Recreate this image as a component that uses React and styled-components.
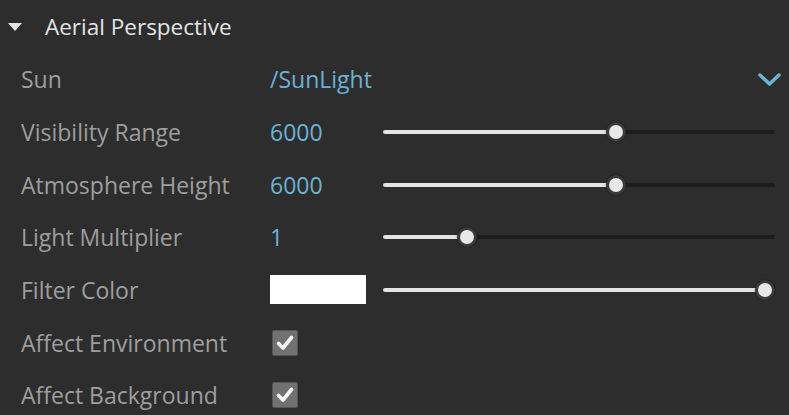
import styled, { createGlobalStyle } from "styled-components";

const GlobalStyle = createGlobalStyle`
  html, body {
    margin: 0;
    padding: 0;
    background: #2d2d2d;
  }
  body {
    font-family: "Open Sans", "Noto Sans", sans-serif;
  }
`;

const Panel = styled.div`
  width: 789px;
  height: 415px;
  background: #2d2d2d;
  overflow: hidden;
`;

const Header = styled.div`
  display: flex;
  align-items: center;
  height: 53px;
  padding-left: 8px;
  gap: 10px;
  color: #e4e4e4;
  font-size: 22.5px;
`;

const Caret = styled.span`
  width: 0;
  height: 0;
  border-left: 7px solid transparent;
  border-right: 7px solid transparent;
  border-top: 8px solid #e4e4e4;
  margin-right: 13px;
  margin-top: 1px;
`;

const Row = styled.div`
  display: grid;
  grid-template-columns: 249px 113px 1fr;
  align-items: center;
  height: 52.67px;
  padding-left: 21px;
  padding-right: 14px;
`;

const Label = styled.div`
  color: #9e9e9e;
  font-size: 23px;
  white-space: nowrap;
`;

const Value = styled.div`
  color: #6cb2d6;
  font-size: 23px;
  white-space: nowrap;
`;

const SelectValue = styled(Value)`
  grid-column: 2 / 4;
  display: flex;
  align-items: center;
  justify-content: space-between;
  margin-right: -6px;
`;

const Track = styled.div`
  position: relative;
  height: 4px;
  background: #1d1d1d;
  border-radius: 2px;
`;

const Fill = styled.div`
  height: 100%;
  background: #e4e4e4;
  border-radius: 2px;
`;

const Thumb = styled.div`
  position: absolute;
  top: 50%;
  width: 14px;
  height: 14px;
  border-radius: 50%;
  background: #e8e8e8;
  border: 3px solid #3a3a3a;
  box-shadow: 0 0 2px rgba(0, 0, 0, 0.6);
  transform: translate(-50%, -50%);
`;

const Swatch = styled.div`
  width: 96px;
  height: 29px;
  background: #ffffff;
`;

const Check = styled.div`
  width: 24px;
  height: 24px;
  margin-left: 2px;
  background: #717171;
  border: 1px solid #555555;
  border-radius: 2px;
  display: flex;
  align-items: center;
  justify-content: center;
`;

function Slider({ pct }) {
  return (
    <Track>
      <Fill style={{ width: `${pct}%` }} />
      <Thumb style={{ left: `${pct}%` }} />
    </Track>
  );
}

function CheckMark() {
  return (
    <svg width="20" height="20" viewBox="0 0 20 20">
      <path d="M3.5 10.5 L8 15 L16.5 4.5" fill="none" stroke="#f4f4f4" strokeWidth="3.6" strokeLinecap="round" strokeLinejoin="round" />
    </svg>
  );
}

function Chevron() {
  return (
    <svg width="23" height="15" viewBox="0 0 23 15">
      <path d="M2 3 L11.5 12 L21 3" fill="none" stroke="#6cb2d6" strokeWidth="3.5" strokeLinecap="round" strokeLinejoin="round" />
    </svg>
  );
}

export default function App() {
  return (
    <Panel>
      <GlobalStyle />
      <Header>
        <Caret />
        Aerial Perspective
      </Header>
      <Row>
        <Label>Sun</Label>
        <SelectValue>
          /SunLight
          <Chevron />
        </SelectValue>
      </Row>
      <Row>
        <Label>Visibility Range</Label>
        <Value>6000</Value>
        <Slider pct={59.4} />
      </Row>
      <Row>
        <Label>Atmosphere Height</Label>
        <Value>6000</Value>
        <Slider pct={59.4} />
      </Row>
      <Row>
        <Label>Light Multiplier</Label>
        <Value>1</Value>
        <Slider pct={21.4} />
      </Row>
      <Row>
        <Label>Filter Color</Label>
        <Swatch />
        <Slider pct={97.4} />
      </Row>
      <Row>
        <Label>Affect Environment</Label>
        <Check>
          <CheckMark />
        </Check>
      </Row>
      <Row>
        <Label>Affect Background</Label>
        <Check>
          <CheckMark />
        </Check>
      </Row>
    </Panel>
  );
}
